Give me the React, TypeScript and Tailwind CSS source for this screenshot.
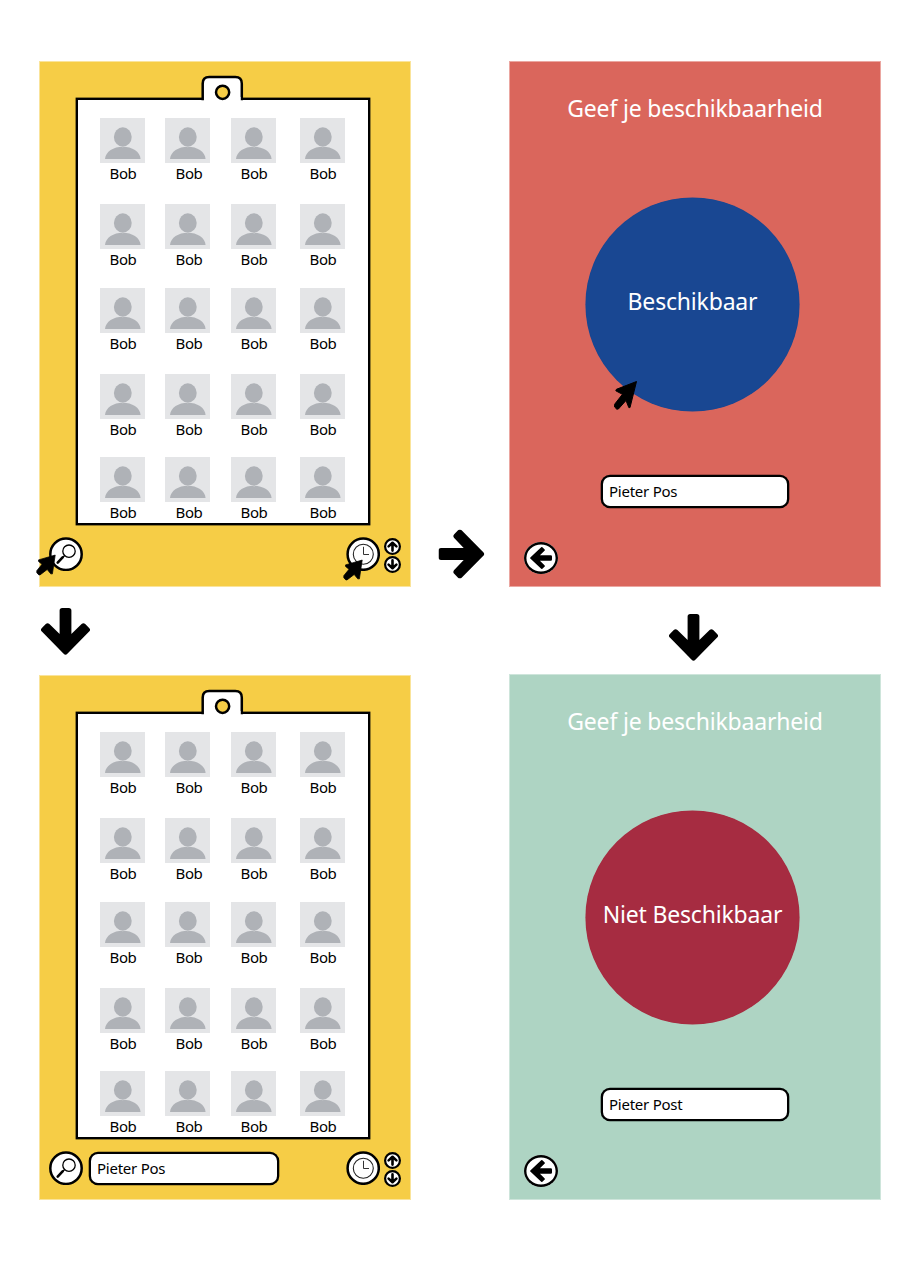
import React from "react";

function ThickArrow({ className }: { className: string }) {
  return (
    <svg viewBox="0 0 49 47" className={className} preserveAspectRatio="none">
      <path
        d="M21.200 2.600H27.800V32L42.400 17.900L46.300 21.800L24.500 44L2.700 21.800L6.600 17.900L21.200 32Z"
        fill="#000"
        stroke="#000"
        strokeWidth="5.200"
        strokeLinejoin="round"
      />
    </svg>
  );
}

function Cursor({ className, small = false }: { className: string; small?: boolean }) {
  return (
    <svg viewBox="0 0 25 31" className={className} preserveAspectRatio="none">
      <path
        d={
          small
            ? "M24 1.500L3.200 8.300V10.500L7.500 14.500L1 23.500V26.500L3.600 29.500H5L14 21.800L18.500 28H20.500Z"
            : "M23.500 1.500L3.400 9.300L2.800 10.800L9.400 14.300L1.600 24.300L1.600 27L3.800 29.200L5.400 29L13 20.500L15.800 27.600L17 27.600Z"
        }
        stroke="#000"
        strokeWidth="1"
        strokeLinejoin="round"
      />
    </svg>
  );
}

function Avatar() {
  return (
    <svg viewBox="0 0 45 45" className="block h-[45px] w-[45px] bg-[#e4e5e7]">
      <path d="M5 41C5.600 33.500 13.500 28.800 22.800 28.800S40 33.500 40.600 41Z" fill="#afb2b7" />
      <ellipse cx="22.800" cy="19" rx="9.400" ry="10.200" fill="#e4e5e7" />
      <ellipse cx="22.800" cy="19" rx="8.900" ry="9.700" fill="#afb2b7" />
    </svg>
  );
}

function SearchIcon() {
  return (
    <svg viewBox="0 0 34 34" className="block h-[34px] w-[34px]" fill="none" stroke="#000">
      <circle cx="17" cy="17.200" r="15.700" fill="#fff" strokeWidth="2.500" />
      <circle cx="20" cy="14.200" r="6.200" strokeWidth="1.300" />
      <path d="M15.600 18.600L13.500 20.700" strokeWidth="1.400" />
      <path d="M13.600 20.400L8.700 25.600" strokeWidth="2.600" strokeLinecap="round" />
    </svg>
  );
}

function ClockIcon() {
  return (
    <svg viewBox="0 0 34 34" className="block h-[34px] w-[34px]" fill="none" stroke="#000">
      <circle cx="17.200" cy="17.200" r="15.600" fill="#fff" strokeWidth="2.500" />
      <circle cx="17.300" cy="17.200" r="10" stroke="#222" strokeWidth="1.100" />
      <path d="M17.500 9.800V17.500H23" stroke="#333" strokeWidth="1" />
    </svg>
  );
}

function SortIcon({ down = false }: { down?: boolean }) {
  return (
    <svg viewBox="0 0 17 17" className={down ? "block size-[17px] rotate-180" : "block size-[17px]"} fill="none" stroke="#000">
      <circle cx="8.500" cy="8.500" r="7.400" fill="#fff" strokeWidth="2.200" />
      <path d="M8.500 12.600V5M4.600 8.400L8.500 4.800L12.400 8.400" strokeWidth="2.600" strokeLinecap="round" strokeLinejoin="round" />
    </svg>
  );
}

function Field({ value, className }: { value: string; className: string }) {
  return (
    <div className={"flex h-[29px] items-center rounded-[7px] bg-white pl-1.5 text-[15px] tracking-[-0.240px] text-black shadow-[0_0_0_2.300px_#000] " + className}>
      {value}
    </div>
  );
}

const people = Array.from({ length: 20 }, () => "Bob");

function Clipboard() {
  return (
    <div className="relative ml-[39px] h-[423px] w-[290px] bg-white shadow-[0_0_0_2.400px_#000]">
      <svg viewBox="0 0 44 28" className="absolute -top-[26px] left-[122px] h-7 w-11">
        <path d="M2.700 26.200V9.500Q2.700 3 9.200 3H35.300Q41.800 3 41.800 9.500V26.200" fill="#fff" stroke="#000" strokeWidth="2.500" />
        <path d="M4 23H40.500V28H4Z" fill="#fff" />
        <circle cx="22.600" cy="18.300" r="6.600" fill="#f6cd46" stroke="#000" strokeWidth="2.500" />
      </svg>
      <div className="grid grid-cols-[65px_66px_69px_45px] grid-rows-[86px_84px_86px_83px_66px] pt-[18px] pl-[22px]">
        {people.map((name, i) => (
          <div key={i} className="flex w-[45px] flex-col items-center">
            <Avatar />
            <span className={i % 4 === 1 ? "ml-[3px] text-[15px] leading-[20px] tracking-[-0.350px]" : "ml-px text-[15px] leading-[20px] tracking-[-0.350px]"}>
              {name}
            </span>
          </div>
        ))}
      </div>
    </div>
  );
}

function Overview({ query, cursors = false, className }: { query?: string; cursors?: boolean; className: string }) {
  return (
    <section className={"relative w-[372px] bg-[#f6cd46] pt-[39px] shadow-[inset_0_0_0_1px_#fae49b] " + className}>
      <Clipboard />
      <div className="mt-[14px] flex h-[35px] items-start pl-[10px]">
        <SearchIcon />
        {query && <Field value={query} className="mt-[3px] mr-[2px] ml-[8px] w-[186px]" />}
        <div className={query ? "ml-[67px]" : "ml-[263px]"}>
          <ClockIcon />
        </div>
        <div className="mt-px ml-1 flex flex-col gap-[0.5px]">
          <SortIcon />
          <SortIcon down />
        </div>
      </div>
      {cursors && (
        <>
          <Cursor small className="absolute top-[493px] -left-[3px] h-[22px] w-[20px]" />
          <Cursor small className="absolute top-[498px] left-[304px] h-[22px] w-[20px]" />
        </>
      )}
    </section>
  );
}

interface AvailabilityProps {
  label: string;
  name: string;
  panel: string;
  button: string;
  cursor?: boolean;
}

function Availability({ label, name, panel, button, cursor = false }: AvailabilityProps) {
  return (
    <section className={"relative flex h-[526px] w-[372px] flex-col " + panel}>
      <h1 className="pt-[31px] text-center text-[23px] leading-8 tracking-[-0.190px] text-white">Geef je beschikbaarheid</h1>
      <div
        className={
          "mt-[74px] ml-[77px] flex size-[213px] items-center justify-center rounded-full pb-[7px] text-[23px] tracking-[-0.190px] whitespace-nowrap text-white " +
          button
        }
      >
        {label}
      </div>
      <Field value={name} className="mt-[66px] ml-[94px] w-[184px]" />
      <div className="mt-[36px] ml-[15px] flex h-8 w-[34px] items-center justify-center rounded-[50%] bg-white shadow-[inset_0_0_0_2.400px_#000]">
        <ThickArrow className="h-[22px] w-[22px] rotate-90" />
      </div>
      {cursor && <Cursor className="absolute top-[319px] left-[104px] h-[31px] w-[25px]" />}
    </section>
  );
}

export default function App() {
  return (
    <main className="flex h-[1262px] w-[920px] items-start bg-white pt-[61px] pl-[39px] font-['Noto_Sans',sans-serif] text-black">
      <div className="w-[372px]">
        <Overview cursors className="h-[526px]" />
        <div className="h-[88px] pt-[21px] pl-[1.500px]">
          <ThickArrow className="h-[47px] w-[49px]" />
        </div>
        <Overview query="Pieter Pos" className="h-[525px]" />
      </div>
      <div className="flex w-[98px] justify-center pt-[469.500px] pl-[3px]">
        <ThickArrow className="h-[46px] w-[49px] -rotate-90" />
      </div>
      <div className="w-[372px]">
        <Availability
          label="Beschikbaar"
          name="Pieter Pos"
          panel="bg-[#da665c] shadow-[inset_0_0_0_1px_#eba7a1]"
          button="bg-[#194792] shadow-[0_0_0_0.600px_#194792]"
          cursor
        />
        <div className="h-[87px] pt-[27px] pl-[159.500px]">
          <ThickArrow className="h-[47px] w-[49px]" />
        </div>
        <Availability
          label="Niet Beschikbaar"
          name="Pieter Post"
          panel="bg-[#aed4c3] shadow-[inset_0_0_0_1px_#cee5db]"
          button="bg-[#a62c41] shadow-[0_0_0_0.600px_#a62c41]"
        />
      </div>
    </main>
  );
}
